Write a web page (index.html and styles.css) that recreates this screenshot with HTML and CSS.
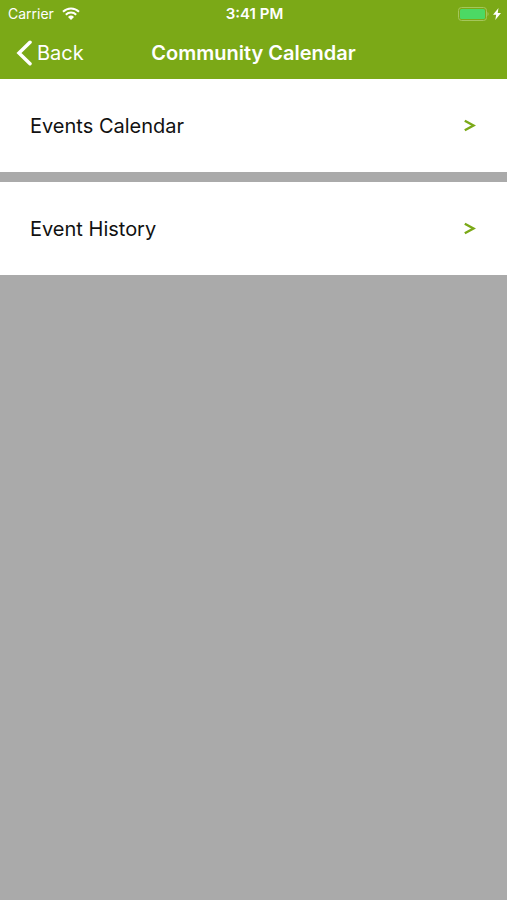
FILE: index.html
```html
<!DOCTYPE html>
<html lang="en">
<head>
<meta charset="utf-8">
<meta name="viewport" content="width=device-width, initial-scale=1">
<title>Community Calendar</title>
<link rel="stylesheet" href="styles.css">
</head>
<body>
<header class="header">
  <div class="status">
    <div class="status-left">
      <span>Carrier</span>
      <svg class="wifi" viewBox="0 0 18 13" aria-hidden="true">
        <path d="M1 4.800a11.500 11.500 0 0 1 16 0M3.800 7.700a7.500 7.500 0 0 1 10.400 0"/>
        <path class="wifi-dot" d="M6 9.900a4.300 4.300 0 0 1 6 0L9 12.900z"/>
      </svg>
    </div>
    <span class="time">3:41 PM</span>
    <div class="status-right">
      <svg class="battery" viewBox="0 0 32 14" aria-hidden="true">
        <rect class="battery-case" x="1.500" y=".5" width="28" height="13" rx="3"/>
        <rect class="battery-level" x="3" y="2" width="25" height="10" rx="1.5"/>
        <path class="battery-tip" d="M30.500 5c1.500.5 1.500 3.500 0 4z"/>
      </svg>
      <svg class="bolt" viewBox="0 0 8 12" aria-hidden="true"><path d="M5.500 0 0 6.800h3.200L2.300 12 8 5H4.700z"/></svg>
    </div>
  </div>
  <nav class="nav">
    <button class="back" type="button">
      <svg class="back-icon" viewBox="0 0 16 26" aria-hidden="true"><path d="M14 2.300 3 13l11 10.700"/></svg>
      <span>Back</span>
    </button>
    <h1 class="title">Community Calendar</h1>
  </nav>
</header>
<main class="list">
  <a class="row" href="#events">
    <span>Events Calendar</span>
    <svg class="arrow" viewBox="0 0 12 13" aria-hidden="true"><path d="M.8 1.700 9.500 6.500.8 11.300"/></svg>
  </a>
  <a class="row" href="#history">
    <span>Event History</span>
    <svg class="arrow" viewBox="0 0 12 13" aria-hidden="true"><path d="M.8 1.700 9.500 6.500.8 11.300"/></svg>
  </a>
</main>
</body>
</html>
```
FILE: styles.css
```css
* {
  box-sizing: border-box;
}

body {
  margin: 0;
  min-height: 100vh;
  background: #aaa;
  color: #111;
  font-family: Inter, "Liberation Sans", sans-serif;
}

svg {
  display: block;
  flex: none;
  fill: none;
}

.header {
  background: #7ba917;
  color: #fff;
}

.status,
.nav {
  display: grid;
  grid-template-columns: 1fr auto 1fr;
  align-items: center;
}

.status {
  height: 27px;
  padding: 0 6px 0 8px;
  font-size: 14px;
}

.status-left,
.status-right {
  display: flex;
  align-items: center;
  gap: 8px;
}

.status-right {
  justify-content: flex-end;
  gap: 4px;
}

.time {
  font-size: 15px;
  font-weight: 600;
}

.wifi {
  width: 18px;
  height: 13px;
  stroke: #fff;
  stroke-width: 2;
}

.wifi-dot {
  fill: #fff;
  stroke: none;
}

.battery {
  width: 32px;
  height: 14px;
}

.battery-case {
  stroke: #a5c65c;
}

.battery-level {
  fill: #4cd964;
}

.battery-tip {
  fill: #a5c65c;
}

.bolt {
  width: 8px;
  height: 12px;
  fill: #fff;
}

.nav {
  height: 52px;
  padding: 0 16px;
}

.back {
  display: flex;
  align-items: center;
  justify-self: start;
  gap: 5px;
  padding: 0;
  border: 0;
  background: none;
  color: inherit;
  font: inherit;
  font-size: 20px;
}

.back-icon {
  width: 16px;
  height: 26px;
  stroke: #fff;
  stroke-width: 3.5;
  stroke-linecap: round;
}

.title {
  margin: 0;
  font-size: 20px;
  font-weight: 600;
}

.list {
  display: grid;
  gap: 10px;
}

.row {
  display: flex;
  align-items: center;
  justify-content: space-between;
  height: 93px;
  padding: 0 31px 0 30px;
  background: #fff;
  color: inherit;
  font-size: 20px;
  text-decoration: none;
}

.arrow {
  width: 12px;
  height: 13px;
  stroke: #7ba917;
  stroke-width: 2.4;
}
```
